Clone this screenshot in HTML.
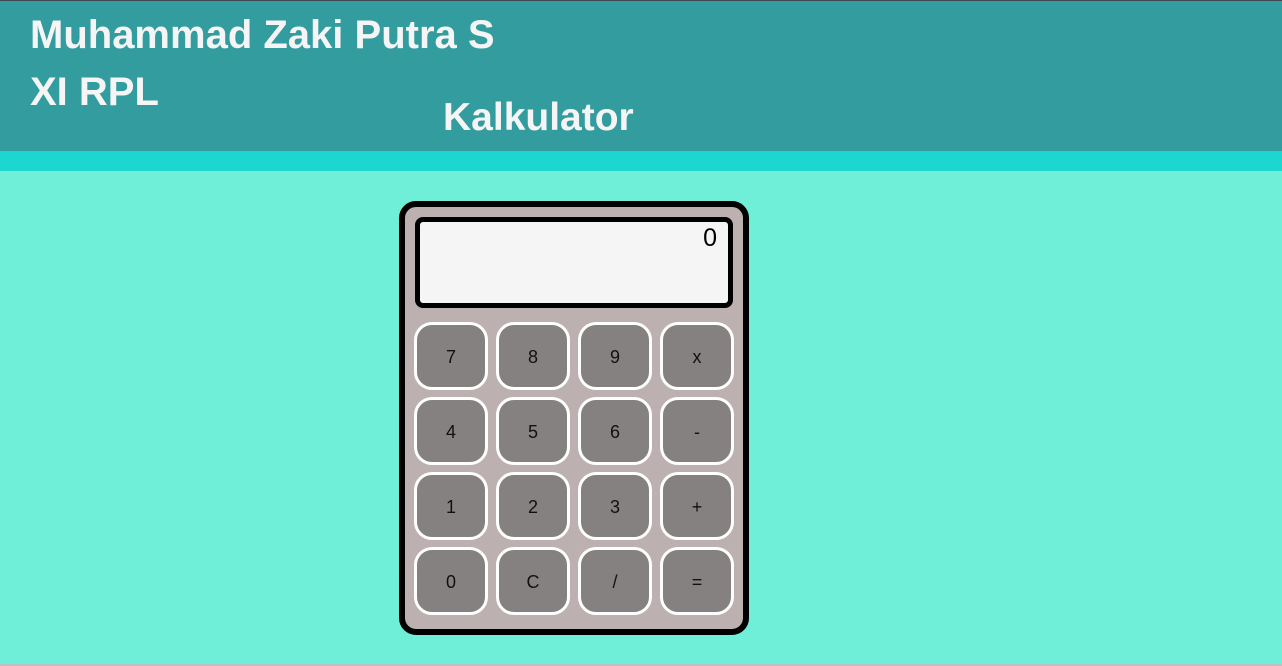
<!DOCTYPE html>
<html><head><meta charset="utf-8"><style>
*{margin:0;padding:0;box-sizing:border-box}
body{width:1282px;height:666px;overflow:hidden;background:#6fefd8;font-family:"Liberation Sans",Arial,sans-serif;position:relative}
.top{position:absolute;left:0;top:0;width:1282px;height:1px;background:#3a4a4f}
.hdr{position:absolute;left:0;top:1px;width:1282px;height:150px;background:#329c9f}
.strip{position:absolute;left:0;top:151px;width:1282px;height:20px;background:#1dd6cf}
.t{position:absolute;color:#f5f5f5;font-weight:bold;font-size:40px;line-height:1;white-space:nowrap}
.bot{position:absolute;left:0;top:664px;width:1282px;height:2px;background:#c0c0c0}
.calc{position:absolute;left:399px;top:201px;width:350px;height:434px;background:#bcb1b0;border:6px solid #000;border-radius:17px}
.disp{position:absolute;left:415px;top:217px;width:318px;height:91px;background:#f5f5f5;border:5px solid #000;border-radius:8px;text-align:right;font-size:25px;padding:4px 11px 0 0;line-height:25px}
.b{position:absolute;width:74px;height:68px;background:#858180;border:3px solid #fff;border-radius:18px;text-align:center;line-height:64px;font-size:18px;color:#111}
</style></head><body>
<div class="top"></div>
<div class="hdr"></div>
<div class="strip"></div>
<div class="t" style="left:30px;top:15px">Muhammad Zaki Putra S</div>
<div class="t" style="left:30px;top:72px">XI RPL</div>
<div class="t" style="left:443px;top:98px;font-size:39px">Kalkulator</div>
<div class="calc"></div>
<div class="disp">0</div>
<div class="b" style="left:414px;top:322px">7</div>
<div class="b" style="left:496px;top:322px">8</div>
<div class="b" style="left:578px;top:322px">9</div>
<div class="b" style="left:660px;top:322px">x</div>
<div class="b" style="left:414px;top:397px">4</div>
<div class="b" style="left:496px;top:397px">5</div>
<div class="b" style="left:578px;top:397px">6</div>
<div class="b" style="left:660px;top:397px">-</div>
<div class="b" style="left:414px;top:472px">1</div>
<div class="b" style="left:496px;top:472px">2</div>
<div class="b" style="left:578px;top:472px">3</div>
<div class="b" style="left:660px;top:472px">+</div>
<div class="b" style="left:414px;top:547px">0</div>
<div class="b" style="left:496px;top:547px">C</div>
<div class="b" style="left:578px;top:547px">/</div>
<div class="b" style="left:660px;top:547px">=</div>
<div class="bot"></div>
</body></html>
